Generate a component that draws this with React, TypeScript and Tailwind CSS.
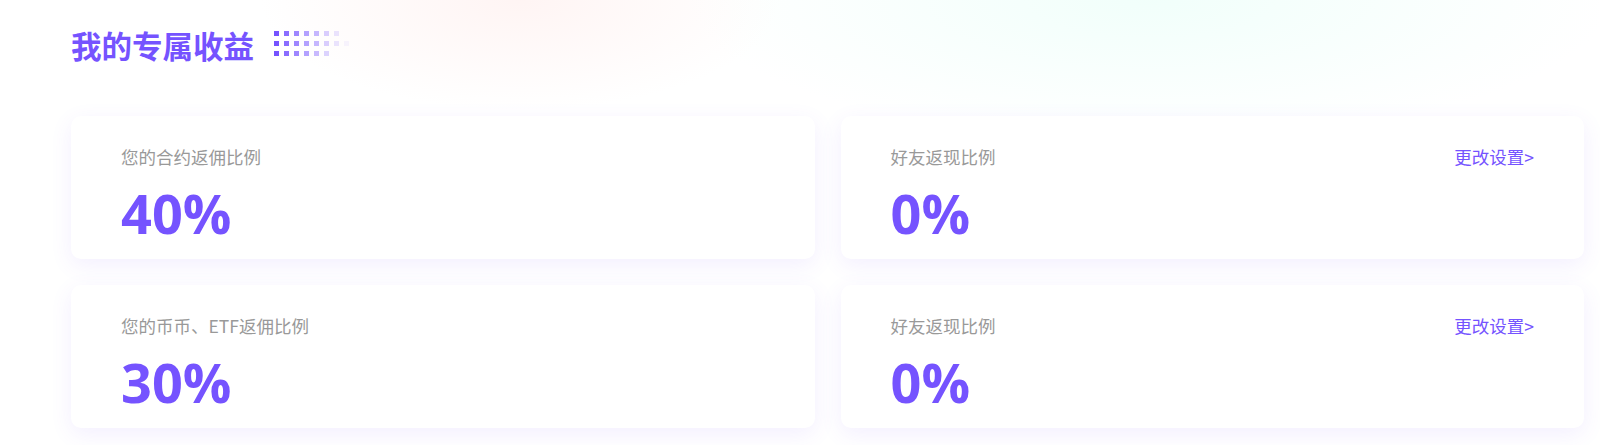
import React from 'react';

const dotRows: number[][] = [
  [1, 0.85, 0.7, 0.55, 0.42, 0.28, 0.15],
  [1, 0.85, 0.7, 0.55, 0.42, 0.28, 0.15, 0.06],
  [1, 0.85, 0.7, 0.55, 0.4, 0.25],
];

const cards = [
  { label: '您的合约返佣比例', value: '40%', link: false },
  { label: '好友返现比例', value: '0%', link: true },
  { label: '您的币币、ETF返佣比例', value: '30%', link: false },
  { label: '好友返现比例', value: '0%', link: true },
];

function Dots() {
  return (
    <div className="flex flex-col gap-[5px]">
      {dotRows.map((row, i) => (
        <div key={i} className="flex gap-[5px]">
          {row.map((o, j) => (
            <span key={j} className="block w-[5px] h-[5px] bg-[#7553ff]" style={{ opacity: o }} />
          ))}
        </div>
      ))}
    </div>
  );
}

export default function App() {
  return (
    <div
      className="relative w-full h-[445px] overflow-hidden bg-white pl-[71px] pr-[16px] bg-[radial-gradient(ellipse_260px_110px_at_520px_0px,rgba(255,232,230,0.45),rgba(255,255,255,0)),radial-gradient(ellipse_460px_140px_at_1150px_0px,rgba(232,255,248,0.6),rgba(255,255,255,0))]"
      style={{ fontFamily: '"Noto Sans CJK SC", "Noto Sans", sans-serif' }}
    >
      <div className="flex items-center gap-[20px] pt-[24px] h-[66px]">
        <h2 className="text-[30.5px] leading-[40px] font-bold text-[#7553ff]">我的专属收益</h2>
        <div className="-mt-[4px]">
          <Dots />
        </div>
      </div>

      <div className="grid grid-cols-2 gap-[26px] mt-[50px]">
        {cards.map((c, i) => (
          <div
            key={i}
            className="h-[143px] bg-white rounded-[10px] shadow-[0_6px_22px_rgba(117,83,255,0.09)] pl-[50px] pr-[50px] pt-[28px]"
          >
            <div className="flex items-center justify-between">
              <span className="text-[17.5px] leading-[26px] text-[#999999]">{c.label}</span>
              {c.link && (
                <a href="#" className="text-[17.5px] leading-[26px] text-[#7553ff]">
                  更改设置&gt;
                </a>
              )}
            </div>
            <div
              className="mt-[16px] text-[54px] leading-[54px] font-bold text-[#7553ff]"
              style={{ fontFamily: '"Open Sans", "Liberation Sans", sans-serif' }}
            >
              {c.value}
            </div>
          </div>
        ))}
      </div>
    </div>
  );
}
